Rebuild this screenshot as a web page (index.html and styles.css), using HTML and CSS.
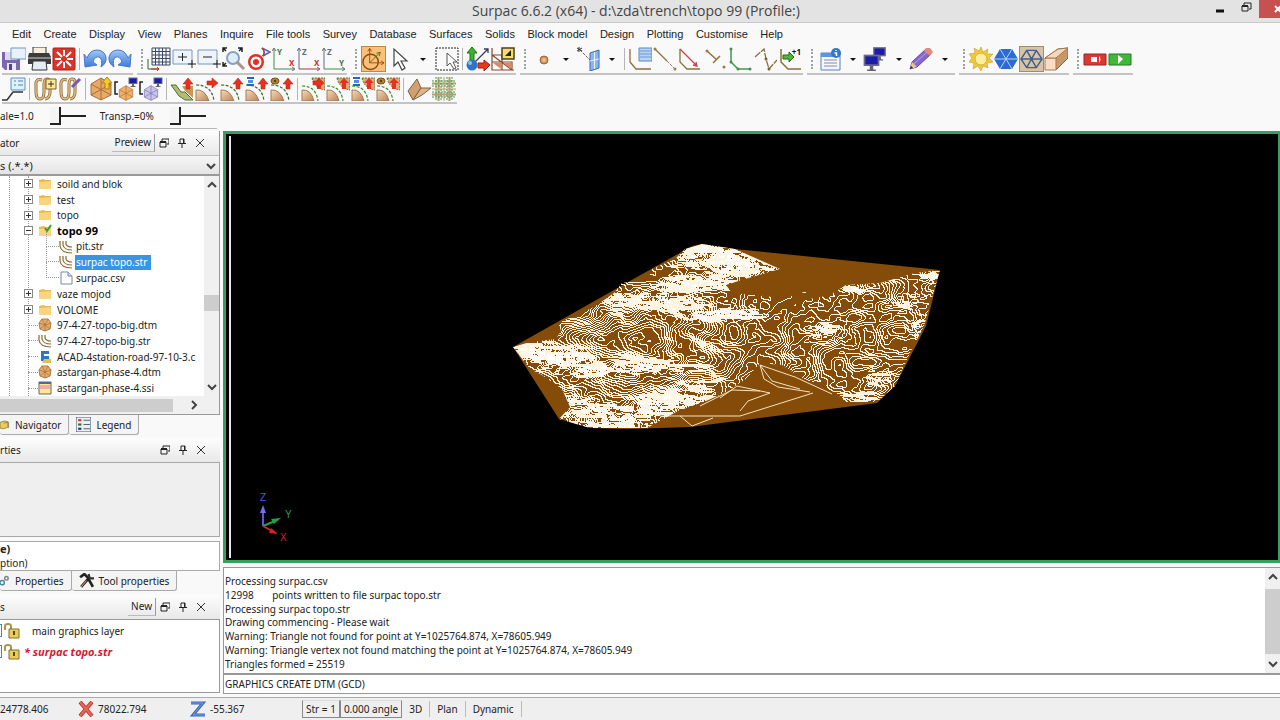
FILE: index.html
```html
<!DOCTYPE html>
<html lang="en">
<head>
  <meta charset="UTF-8">
  <meta name="viewport" content="width=device-width, initial-scale=1.0">
  <title>Surpac 6.6.2 (x64)</title>
  <link rel="stylesheet" href="styles.css">
</head>
<body>
  <!-- shared icons -->
  <svg class="sprite" aria-hidden="true">
    <defs>
      <linearGradient id="blue" x1="0" y1="0" x2="0" y2="1"><stop offset="0" stop-color="#9cc8f8"/><stop offset="1" stop-color="#3f7ad8"/></linearGradient>
      <linearGradient id="tan" x1="0" y1="0" x2="1" y2="1"><stop offset="0" stop-color="#f6dcc0"/><stop offset="1" stop-color="#b88050"/></linearGradient>
      <radialGradient id="ball"><stop offset="0" stop-color="#f8cfa0"/><stop offset="1" stop-color="#c08048"/></radialGradient>
    </defs>
    <symbol id="up" viewBox="0 0 24 24"><path d="M18 1l5 6h-3v5h-4V7h-3z" fill="#e8301c" stroke="#b03020" stroke-width=".6"/></symbol>
    <symbol id="right" viewBox="0 0 24 24"><path d="M23 6l-6-5v3h-5v4h5v3z" fill="#e8301c" stroke="#b03020" stroke-width=".6"/></symbol>
    <symbol id="dome" viewBox="0 0 24 24">
      <path d="M1 24V13q9-1 13 11z" fill="url(#tan)" stroke="#a87850"/>
      <path d="M1 8q16 0 18 16" fill="none" stroke="#3a6a28" stroke-width="1.2" stroke-dasharray="3 1.5"/>
    </symbol>
    <symbol id="corner" viewBox="0 0 24 24">
      <path d="M1 24V13q9-1 12 11z" fill="url(#tan)" stroke="#a87850"/>
      <path d="M1 9q14 0 16 15" fill="none" stroke="#3a8a28" stroke-width="1.2" stroke-dasharray="3 1.5"/>
      <path d="M11 1q2 10 13 12V1z" fill="#dca880" stroke="#5a7a28" stroke-dasharray="2 1"/>
      <path d="M18 1l5 5h-3v6h-4V6h-3z" fill="#e8301c"/>
    </symbol>
    <symbol id="sheet" viewBox="0 0 24 24"><path d="M2 1h7M2 8h7" stroke="#2a62c0" stroke-width="2"/><path d="M3 4.5h5" stroke="#5a8ad8" stroke-width="3"/></symbol>
    <symbol id="ring" viewBox="0 0 24 24"><ellipse cx="5" cy="4" rx="4" ry="3" fill="#b88030" stroke="#7a5018"/><circle cx="5" cy="4" r="1" fill="#422"/></symbol>
    <symbol id="hex" viewBox="0 0 24 24"><path d="M12 1l10 6v11l-10 5-10-5V7z"/><path d="M12 1v22M2 7l20 11M2 18L22 7" fill="none"/></symbol>
    <symbol id="screen" viewBox="0 0 24 24"><path d="M3 3h18v13H3z" fill="#6a6a90"/><path d="M5 5h14v9H5z" fill="#1c1ca8"/><path d="M10 16h4v4h3v2H7v-2h3z" fill="#666"/></symbol>
    <symbol id="coil" viewBox="0 0 24 24"><path d="M9 3Q2 1 3 9v6q0 7 4 7t4-7V7q0-5 3-5 4 0 3 6v7q0 6-5 7" fill="none" stroke="#8a6838" stroke-width="3"/><path d="M9 3Q2 1 3 9v6q0 7 4 7t4-7V7q0-5 3-5 4 0 3 6v7q0 6-5 7" fill="none" stroke="#e4bc7c" stroke-width="1.500"/></symbol>
    <symbol id="folder" viewBox="0 0 14 14"><path d="M1 3l5-1 1 1h6v9H1z" fill="#e8b848"/><path d="M1 5l12-1v8H1z" fill="#fbd47c"/></symbol>
    <symbol id="str" viewBox="0 0 14 14"><path d="M1 1v5q1 7 12 7M4 1v4q1 5 9 5M7 1v3q1 3 6 3" fill="none" stroke="#8a6a30" stroke-width="1.2"/></symbol>
    <symbol id="dtm" viewBox="0 0 14 14"><path d="M4 1h6l3 4-1 6-5 2-5-2-1-6z" fill="#e4ac6c" stroke="#b07840"/><path d="M4 1l3 6 3-6M1 5l6 2 6-2M2 11l5-4 5 4M7 7v6" fill="none" stroke="#a87038" stroke-width=".7"/></symbol>
    <symbol id="float" viewBox="0 0 10 10"><path d="M3 3V1h7v5H8M1 4h6v5H1z" fill="none" stroke="#222"/><path d="M1 4h6" stroke="#222" stroke-width="2"/></symbol>
    <symbol id="pin" viewBox="0 0 10 10"><path d="M3 5V1h4v4M1 5.500h8M5 6v4M6.500 1v4" fill="none" stroke="#222"/></symbol>
    <symbol id="x" viewBox="0 0 10 10"><path d="M1 1l8 8M9 1L1 9" stroke="#333"/></symbol>
    <symbol id="chev-up" viewBox="0 0 10 10"><path d="M1 7l4-4 4 4" fill="none" stroke="#444" stroke-width="2"/></symbol>
    <symbol id="chev-down" viewBox="0 0 10 10"><path d="M1 3l4 4 4-4" fill="none" stroke="#444" stroke-width="2"/></symbol>
    <symbol id="chev-right" viewBox="0 0 10 10"><path d="M3 1l4 4-4 4" fill="none" stroke="#444" stroke-width="2"/></symbol>
    <symbol id="lock" viewBox="0 0 16 16"><path d="M1 7V3q0-2 3-2t3 2v5" fill="none" stroke="#a89848" stroke-width="2"/><path d="M5 6h10v9H5z" fill="#e8cc60" stroke="#8a7020"/><path d="M10 8v4" stroke="#5a4810" stroke-width="2"/></symbol>
  </svg>

  <header class="titlebar">
    <h1>Surpac 6.6.2 (x64) - d:\zda\trench\topo 99 (Profile:)</h1>
    <div class="window-buttons">
      <button aria-label="Minimize"><svg width="10" height="10"><path d="M1 8h8" stroke="#111" stroke-width="3"/></svg></button>
      <button aria-label="Restore"><svg width="11" height="11"><path d="M3 3V1h7v6H8M1 4h6v5H1z" fill="none" stroke="#222"/><path d="M1 4h6" stroke="#222" stroke-width="2"/></svg></button>
      <button class="close" aria-label="Close"><svg width="8" height="8"><path d="M3 1l6 6M9 1L3 7" stroke="#fff" stroke-width="2"/></svg></button>
    </div>
  </header>

  <nav class="menubar">
    <button>Edit</button><button>Create</button><button>Display</button><button>View</button><button>Planes</button><button>Inquire</button><button>File tools</button><button>Survey</button><button>Database</button><button>Surfaces</button><button>Solids</button><button>Block model</button><button>Design</button><button>Plotting</button><button>Customise</button><button>Help</button>
  </nav>

  <div class="toolbars">
    <div class="toolbar">
      <button class="tool" aria-label="Save"><svg viewBox="0 0 24 24"><path d="M0 5h18v18H3l-3-3z" fill="#7a68b0"/><path d="M3 5h12v8H3z" fill="#ddd8f0"/><path d="M5 16h9v7H5z" fill="#e8e8f0"/><path d="M7 17h3v6H7z" fill="#54448c"/><path d="M9 1h15v11H9z" fill="#e8f2fc" stroke="#6a98c8"/></svg></button>
      <button class="tool" aria-label="Print"><svg viewBox="0 0 24 24"><path d="M6 0h13v7H6z" fill="#f8f0d8" stroke="#333"/><path d="M2 6h20l2 4v7H1v-7z" fill="#3c3c3c"/><path d="M1 11h23" stroke="#888" stroke-width="2"/><path d="M6 14h13l1 9H5z" fill="#e4ecf6" stroke="#333"/></svg></button>
      <button class="tool" aria-label="Reset graphics"><svg viewBox="0 0 24 24"><rect x="1" y="1" width="22" height="22" rx="1" fill="#dc3328" stroke="#a82018"/><path d="M12 3v6M12 15v6M3 12h6M15 12h6M5 5l5 5M14 14l5 5M19 5l-5 5M10 14l-5 5" stroke="#fff" stroke-width="2"/></svg></button>
      <span class="sep"></span>
      <button class="tool" aria-label="Undo"><svg viewBox="0 0 24 24"><path d="M1 7l1 13 12-2-4-3q2-6 6-5 4 2 2 10 6-4 5-10-2-7-9-7-7 0-10 8z" fill="url(#blue)" stroke="#4878c8"/></svg></button>
      <button class="tool" aria-label="Redo"><svg viewBox="0 0 24 24"><path d="M23 7l-1 13-12-2 4-3q-2-6-6-5-4 2-2 10-6-4-5-10 2-7 9-7 7 0 10 8z" fill="url(#blue)" stroke="#4878c8"/></svg></button>
    </div>
    <div class="toolbar">
      <span class="grip"></span>
      <button class="tool" aria-label="Grid"><svg viewBox="0 0 24 24"><path d="M5 1h18v17H5zM5 4.500h18M5 8h18M5 11.500h18M5 15h18M8.500 1v17M12 1v17M15.500 1v17M19 1v17" fill="none" stroke="#384868"/><path d="M1 12v10h11" fill="none" stroke="#286828"/><path d="M4 22h8l-2-2M10 24l2-2" stroke="#c03020" fill="none"/></svg></button>
      <button class="tool" aria-label="Zoom in"><svg viewBox="0 0 24 24"><path d="M1 3h19v14H1z" fill="#eef4fc" stroke="#7898b8"/><path d="M10.500 6v8M6 10h9M20 13v8M16 17h8" stroke="#222"/></svg></button>
      <button class="tool" aria-label="Zoom out"><svg viewBox="0 0 24 24"><path d="M1 3h19v14H1z" fill="#eef4fc" stroke="#7898b8"/><path d="M6 10h9M20 13v8M16 17h8" stroke="#222"/></svg></button>
      <button class="tool" aria-label="Zoom all"><svg viewBox="0 0 24 24"><path d="M1 5V1h4M1 1l3 3M16 1h4v4M20 1l-3 3M1 15v4h4M1 19l3-3" fill="none" stroke="#222" stroke-width="1.500"/><circle cx="11" cy="11" r="6" fill="#dcecf8" stroke="#8aa0b8" stroke-width="2"/><path d="M15 15l7 7" stroke="#a89888" stroke-width="3"/></svg></button>
      <button class="tool" aria-label="Centre"><svg viewBox="0 0 24 24"><circle cx="9" cy="15" r="8" fill="#e03028"/><circle cx="9" cy="15" r="5.500" fill="#fff"/><circle cx="9" cy="15" r="3" fill="#e03028"/><path d="M15 1l8 4-7 4q3-4-1-8z" fill="none" stroke="#6858a0" stroke-width="1.500"/><path d="M15 1q4 5 0 8" fill="none" stroke="#d03028"/></svg></button>
      <button class="tool axes" aria-label="Plan view"><svg viewBox="0 0 24 24"><path d="M2 2v20" stroke="#389048"/><path d="M2 22h20" stroke="#408850"/><path d="M0 4l2-3 2 3M20 20l3 2-3 2" fill="none" stroke="#666"/><text x="5" y="8" fill="#387848">Y</text><text x="17" y="19" fill="#c83028">X</text></svg></button>
      <button class="tool axes" aria-label="X section"><svg viewBox="0 0 24 24"><path d="M2 2v20" stroke="#586890"/><path d="M2 22h20" stroke="#a83830"/><path d="M0 4l2-3 2 3M20 20l3 2-3 2" fill="none" stroke="#666"/><text x="5" y="8" fill="#586890">Z</text><text x="17" y="19" fill="#c83028">X</text></svg></button>
      <button class="tool axes" aria-label="Y section"><svg viewBox="0 0 24 24"><path d="M2 2v20" stroke="#586890"/><path d="M2 22h20" stroke="#389048"/><path d="M0 4l2-3 2 3M20 20l3 2-3 2" fill="none" stroke="#666"/><text x="5" y="8" fill="#586890">Z</text><text x="17" y="19" fill="#387848">Y</text></svg></button>
    </div>
    <div class="toolbar">
      <span class="grip"></span>
      <button class="tool on" aria-label="Rotate"><svg viewBox="0 0 24 24"><circle cx="9" cy="15" r="8" fill="none" stroke="#8a4a10" stroke-width="1.500"/><path d="M8 1v15h15M6 4l2-3 2 3M20 14l3 2-3 2" fill="none" stroke="#a84818"/><path d="M8 16L19 5l-4 1M19 5l-1 4" fill="none" stroke="#487818"/></svg></button>
      <button class="tool" aria-label="Select"><svg viewBox="0 0 24 24"><path d="M8 2v17l4-4 4 8 3-2-4-7h6z" fill="#fff" stroke="#444" stroke-width="1.200"/></svg></button>
      <button class="drop wide" aria-label="Select options"></button>
      <button class="tool" aria-label="Window select"><svg viewBox="0 0 24 24"><rect x="1" y="1" width="22" height="22" fill="none" stroke="#222" stroke-dasharray="2 1"/><path d="M12 6v13l3-3 4 6 2-1-3-6h4z" fill="#fff" stroke="#555"/></svg></button>
      <span class="sep"></span>
      <button class="tool" aria-label="Orbit"><svg viewBox="0 0 24 24"><path d="M6 18L22 2M18 2h4v4" fill="none" stroke="#383868" stroke-width="1.300"/><path d="M6 0l5 6H8v8H4V6H1z" fill="#38b828" stroke="#207018"/><path d="M24 18l-6-5v3h-6v5h6v3z" fill="#e83820" stroke="#a02010"/><circle cx="6" cy="18" r="5.500" fill="#3074c8"/><circle cx="4" cy="16" r="2" fill="#90c0f0"/></svg></button>
      <button class="tool" aria-label="Section"><svg viewBox="0 0 24 24"><path d="M1 1v22h22M1 8h10v15M1 15h20v8M1 8l20 15" fill="none" stroke="#884830" stroke-width="1.200"/><path d="M2 16l8 6v-6zM12 16l8 6v-6z" fill="#d88a68"/><path d="M11 1h12v11H11z" fill="#f8dc68" stroke="#484020" stroke-width="1.500"/><path d="M14 9h6V3z" fill="#222"/></svg></button>
    </div>
    <div class="toolbar">
      <span class="grip"></span>
      <button class="tool" aria-label="Point"><svg viewBox="0 0 24 24"><circle cx="14" cy="13" r="4" fill="url(#ball)" stroke="#a06838"/></svg></button>
      <button class="drop" aria-label="Point options"></button>
      <button class="tool" aria-label="Plane"><svg viewBox="0 0 24 24"><path d="M4 3l10 10" stroke="#a04850" stroke-dasharray="3 1"/><path d="M1 4l5-3M3 0v5M1 1l5 3" stroke="#333"/><path d="M14 6l9-3v18l-9 3z" fill="#8cb4f0" stroke="#3868b8"/><path d="M18.500 5v17M14 14l9-2" stroke="#e8f2ff"/></svg></button>
      <button class="drop" aria-label="Plane options"></button>
      <span class="sep"></span>
      <button class="tool" aria-label="New string"><svg viewBox="0 0 24 24"><path d="M11 1h13v13H11z" fill="#b8d4f4" stroke="#5888c0"/><path d="M12 4h12M12 7h12M12 10h12" stroke="#6898d0"/><path d="M2 2v13l6 7h15" fill="none" stroke="#8a7038" stroke-width="1.300"/></svg></button>
      <button class="tool" aria-label="Extend"><svg viewBox="0 0 24 24"><path d="M2 2l12 12" stroke="#907038" stroke-width="1.300"/><path d="M14 14l8 8" stroke="#a07868" stroke-dasharray="3 1"/><circle cx="2" cy="2" r="1.500" fill="#a07848"/><circle cx="22" cy="22" r="1.500" fill="#a07848"/></svg></button>
      <button class="tool" aria-label="Close string"><svg viewBox="0 0 24 24"><path d="M2 2v13l7 7h13" fill="none" stroke="#8a7038" stroke-width="1.300"/><path d="M2 2l17 17M15 18l4 1-1-4" fill="none" stroke="#c04850" stroke-width="1.300"/></svg></button>
      <button class="tool" aria-label="Trim"><svg viewBox="0 0 24 24"><path d="M4 4l10 9M10 16l7-7" stroke="#907038" stroke-width="1.500"/><circle cx="4" cy="4" r="1.500" fill="#a07848"/><circle cx="21" cy="20" r="1.500" fill="#a07848"/></svg></button>
      <button class="tool" aria-label="Segment"><svg viewBox="0 0 24 24"><path d="M3 2v13l7 7h13" fill="none" stroke="#38a048" stroke-width="1.500"/><g fill="#60805a"><circle cx="3" cy="2" r="1.500"/><circle cx="3" cy="15" r="1.500"/><circle cx="10" cy="22" r="1.500"/><circle cx="22" cy="22" r="1.500"/></g></svg></button>
      <button class="tool" aria-label="Break"><svg viewBox="0 0 24 24"><path d="M2 10l9-8 2 10 3 10 8-9" fill="none" stroke="#8a7038" stroke-width="1.300" stroke-dasharray="7 1"/><circle cx="13" cy="12" r="1.500" fill="#806030"/><circle cx="16" cy="22" r="1.500" fill="#806030"/></svg></button>
      <button class="tool axes" aria-label="Next string"><svg viewBox="0 0 24 24"><path d="M3 2v13l7 7h13" fill="none" stroke="#8a7038" stroke-width="1.500"/><path d="M16 10l-5-5v3H5v4h6v3z" fill="#50b830" stroke="#286818"/><text x="23" y="8" text-anchor="end" fill="#111">+1</text></svg></button>
    </div>
    <div class="toolbar">
      <span class="grip"></span>
      <button class="tool" aria-label="Properties info"><svg viewBox="0 0 24 24"><path d="M4 6h19v17H4z" fill="#f4f8fc" stroke="#5880b8"/><path d="M4 6h19v4H4z" fill="#5898e0"/><path d="M7 13h13M7 16h13M7 19h13" stroke="#88a"/><circle cx="19" cy="6" r="5" fill="#3078c8"/><path d="M19 3v1M17.500 6h2v3" stroke="#fff" fill="none" stroke-width="1.500"/></svg></button>
      <button class="drop" aria-label="Info options"></button>
      <button class="tool" aria-label="Displays"><svg viewBox="0 0 24 24"><use href="#screen" x="8" y="-2" width="17" height="17"/><use href="#screen" x="-2" y="5" width="21" height="21"/></svg></button>
      <button class="drop" aria-label="Display options"></button>
      <button class="tool" aria-label="Edit"><svg viewBox="0 0 24 24"><path d="M1 22l2-7L17 2l5 5L8 20z" fill="#8868c8" stroke="#60489c"/><path d="M15 4l2-3h4l3 4-3 4z" fill="#e88878"/><path d="M1 22l2-7 5 5z" fill="#e8c890"/><path d="M1 22l1-3 2 2z" fill="#222"/><path d="M5 17L18 5" stroke="#b8a0e8"/></svg></button>
      <button class="drop" aria-label="Edit options"></button>
    </div>
    <div class="toolbar">
      <span class="grip"></span>
      <button class="tool" aria-label="Light"><svg viewBox="0 0 24 24"><path d="M12 0l2 5 5-3-1 5 6 0-4 4 4 4-6 1 1 5-5-2-2 5-3-5-5 3 1-6-5-1 3-4-3-4 6-1-1-5 5 3z" fill="#f0c838" stroke="#c8a030" stroke-width=".6"/><circle cx="12" cy="12" r="6" fill="#fcf0a0" stroke="#d8b040"/></svg></button>
      <button class="tool" aria-label="Shaded"><svg viewBox="0 0 24 24"><path d="M6 2h12l6 10-6 10H6L0 12z" fill="#2c6cd0"/><path d="M6 2l12 20M18 2L6 22M0 12h24" stroke="#b8d4fa"/></svg></button>
      <button class="tool on grey" aria-label="Wireframe"><svg viewBox="0 0 24 24"><path d="M7 3h10l6 9-6 9H7l-6-9zM7 3l10 18M17 3L7 21M1 12h22" fill="none" stroke="#40608c" stroke-width="1.500"/></svg></button>
      <button class="tool" aria-label="Solid"><svg viewBox="0 0 24 24"><path d="M1 11L14 2l10-1v10L12 23z" fill="#c89868" stroke="#806040"/><path d="M1 11h11v12H1z" fill="#fadcc4" stroke="#a87850"/><path d="M1 11L14 2l10-1-12 10z" fill="#f4d8b8" stroke="#a87850"/></svg></button>
    </div>
    <div class="toolbar">
      <span class="grip"></span>
      <button class="tool" aria-label="Record"><svg viewBox="0 0 24 24"><path d="M1 7h22v11H1z" fill="#dc3830" stroke="#90282c"/><path d="M8 10h6v5H8zM16 9q3 3 0 7z" fill="#fff"/></svg></button>
      <button class="tool" aria-label="Play"><svg viewBox="0 0 24 24"><path d="M1 7h22v11H1z" fill="#40b838" stroke="#287828"/><path d="M10 8l5 4-5 5z" fill="#fff"/></svg></button>
    </div>
  </div>

  <div class="toolbars second">
    <div class="toolbar">
      <button class="tool" aria-label="Profile"><svg viewBox="0 0 24 24"><path d="M9 1h14v12H9z" fill="#e0f0fc" stroke="#5890c8"/><path d="M12 4h2M16 4h5M12 8h2M16 8h5" stroke="#48a"/><path d="M0 23h5l6-8h10" fill="none" stroke="#333" stroke-width="1.500"/></svg></button>
      <span class="sep"></span>
      <button class="tool" aria-label="Add coil"><svg viewBox="0 0 24 24"><use href="#coil"/><path d="M13 2h10v10H13z" fill="#fce898" stroke="#806020"/><path d="M18 4v6M15 7h6" stroke="#332"/></svg></button>
      <button class="tool" aria-label="Edit coil"><svg viewBox="0 0 24 24"><use href="#coil"/><path d="M14 10l8-8" stroke="#7858b8" stroke-width="3"/></svg></button>
      <span class="sep"></span>
      <button class="tool" aria-label="Create DTM"><svg viewBox="0 0 24 24"><use href="#hex" fill="#e8a868" stroke="#a87038"/><path d="M18 0l5 6h-3v6h-4V6h-3z" fill="#f8cc28" stroke="#a88010"/></svg></button>
      <button class="tool" aria-label="Display DTM"><svg viewBox="0 0 24 24"><path d="M4 5H1v12h3" fill="none" stroke="#222" stroke-width="1.500"/><use href="#hex" x="4" y="8" width="16" height="16" fill="#f0b068" stroke="#a87038"/><use href="#screen" x="13" y="-1" width="12" height="12"/></svg></button>
      <button class="tool" aria-label="Hide DTM"><svg viewBox="0 0 24 24"><path d="M4 5H1v12h3" fill="none" stroke="#222" stroke-width="1.500"/><use href="#hex" x="4" y="8" width="16" height="16" fill="#c8c4ec" stroke="#7870b0"/><use href="#screen" x="13" y="-1" width="12" height="12"/></svg></button>
      <span class="sep"></span>
      <button class="tool" aria-label="Pit design"><svg viewBox="0 0 24 24"><path d="M1 8h5l5 7h4l8 8h-8L9 19z" fill="#b8b878" stroke="#487830"/><path d="M12 9h11v12l-8-7z" fill="#c89858"/><use href="#up"/></svg></button>
      <button class="tool" aria-label="Expand right"><svg viewBox="0 0 24 24"><use href="#dome"/><use href="#right"/></svg></button>
      <button class="tool" aria-label="Expand up"><svg viewBox="0 0 24 24"><use href="#dome"/><use href="#up"/></svg></button>
      <button class="tool" aria-label="Expand to sheet"><svg viewBox="0 0 24 24"><use href="#dome"/><use href="#sheet"/><use href="#up"/></svg></button>
      <button class="tool" aria-label="Expand to ring"><svg viewBox="0 0 24 24"><use href="#dome"/><use href="#ring"/><use href="#up"/></svg></button>
      <span class="sep"></span>
      <button class="tool" aria-label="Bench right"><svg viewBox="0 0 24 24"><use href="#corner"/><use href="#right"/></svg></button>
      <button class="tool" aria-label="Bench up"><svg viewBox="0 0 24 24"><use href="#corner"/></svg></button>
      <button class="tool" aria-label="Bench to sheet"><svg viewBox="0 0 24 24"><use href="#corner"/><use href="#sheet"/></svg></button>
      <button class="tool" aria-label="Bench to ring"><svg viewBox="0 0 24 24"><use href="#corner"/><use href="#ring"/></svg></button>
      <span class="sep"></span>
      <button class="tool" aria-label="Fold"><svg viewBox="0 0 24 24"><path d="M1 14L10 2l4 9-8 12z" fill="#d0a070" stroke="#806040"/><path d="M14 11h10l-9 7-9 5z" fill="#deb488" stroke="#806040"/></svg></button>
      <button class="tool" aria-label="Mesh"><svg viewBox="0 0 24 24"><path d="M0 6.500h24M0 17.500h24M6.500 0v24M17.500 0v24" stroke="#b0a070" stroke-width="2"/><path d="M0 12h24M12 0v24" stroke="#b0a070"/><path d="M0 4h24M0 9h24M0 15h24M0 20h24M4 0v24M9 0v24M15 0v24M20 0v24" stroke="#4f9040" stroke-dasharray="2 1"/></svg></button>
    </div>
  </div>

  <div class="sliders">
    <label for="scale">ale=1.0</label>
    <input type="range" id="scale" value="0">
    <label for="transp">Transp.=0%</label>
    <input type="range" id="transp" value="0">
  </div>

  <main class="workspace">
    <aside class="sidebar">
      <section class="panel navigator">
        <div class="panel-head">
          <h2>ator</h2>
          <button class="head-btn">Preview</button>
          <button class="ico" aria-label="Float"><svg><use href="#float"/></svg></button>
          <button class="ico" aria-label="Pin"><svg><use href="#pin"/></svg></button>
          <button class="ico" aria-label="Close"><svg><use href="#x"/></svg></button>
        </div>
        <div class="filter">
          <select aria-label="File filter"><option>s (.*.*)</option></select>
          <svg><use href="#chev-down"/></svg>
        </div>
        <div class="tree-box">
          <ul class="tree">
            <li><i class="box plus"></i><svg><use href="#folder"/></svg>soild and blok</li>
            <li><i class="box plus"></i><svg><use href="#folder"/></svg>test</li>
            <li><i class="box plus"></i><svg><use href="#folder"/></svg>topo</li>
            <li><i class="box"></i><svg viewBox="0 0 14 14"><use href="#folder"/><path d="M7 4l2 3 4-6" fill="none" stroke="#38a030" stroke-width="2"/></svg><b>topo 99</b></li>
            <li class="child"><svg><use href="#str"/></svg><span>pit.str</span></li>
            <li class="child"><svg><use href="#str"/></svg><span class="selected">surpac topo.str</span></li>
            <li class="child last"><svg viewBox="0 0 14 14"><path d="M2 1h7l4 4v8H2z" fill="#fff" stroke="#7888a8"/><path d="M9 1v4h4" fill="#cde" stroke="#7888a8"/></svg><span>surpac.csv</span></li>
            <li><i class="box plus"></i><svg><use href="#folder"/></svg>vaze mojod</li>
            <li><i class="box plus"></i><svg><use href="#folder"/></svg>VOLOME</li>
            <li><i class="dash"></i><svg><use href="#dtm"/></svg>97-4-27-topo-big.dtm</li>
            <li><i class="dash"></i><svg><use href="#str"/></svg>97-4-27-topo-big.str</li>
            <li><i class="dash"></i><svg viewBox="0 0 14 14"><path d="M3 1h8v3H6v2h5v5H3z" fill="#2878c8"/><path d="M6 9h7v4H4z" fill="#e8c040"/></svg>ACAD-4station-road-97-10-3.c</li>
            <li><i class="dash"></i><svg><use href="#dtm"/></svg>astargan-phase-4.dtm</li>
            <li><i class="dash"></i><svg viewBox="0 0 14 14"><path d="M1 1h12v12H1z" fill="#fbe890" stroke="#666"/><path d="M2 4h10v4H2z" fill="#f4a8b0"/><path d="M1 2h12" stroke="#4868a8" stroke-width="2"/></svg>astargan-phase-4.ssi</li>
          </ul>
          <div class="vscroll"><svg><use href="#chev-up"/></svg><div class="track"><div class="thumb"></div></div><svg><use href="#chev-down"/></svg></div>
        </div>
        <div class="hscroll"><div class="thumb"></div><svg><use href="#chev-right"/></svg></div>
      </section>
      <div class="tabs">
        <button class="tab first"><svg viewBox="0 0 14 14"><path d="M0 4l6-2 5 1v8l-6 2-5-1z" fill="#e8cc60" stroke="#86702c"/><path d="M5 5l7-1v8" fill="none" stroke="#86702c"/></svg>Navigator</button>
        <button class="tab"><svg viewBox="0 0 14 14"><path d="M0 0h14v14H0z" fill="#e8f0f4" stroke="#456"/><path d="M2 3h3" stroke="#c33" stroke-width="2"/><path d="M2 7h3" stroke="#363" stroke-width="2"/><path d="M2 11h3" stroke="#338" stroke-width="2"/><path d="M7 3h6M7 7h6M7 11h6" stroke="#566"/></svg>Legend</button>
      </div>

      <section class="panel props">
        <div class="panel-head">
          <h2>rties</h2>
          <button class="ico" aria-label="Float"><svg><use href="#float"/></svg></button>
          <button class="ico" aria-label="Pin"><svg><use href="#pin"/></svg></button>
          <button class="ico" aria-label="Close"><svg><use href="#x"/></svg></button>
        </div>
        <div class="props-body"></div>
        <div class="props-desc"><b>e)</b><span>ption)</span></div>
      </section>
      <div class="tabs">
        <button class="tab first"><svg viewBox="0 0 14 14"><circle cx="3" cy="10" r="3" fill="none" stroke="#4888a8" stroke-width="2"/><circle cx="9" cy="4" r="2.500" fill="none" stroke="#788" stroke-width="2"/></svg>Properties</button>
        <button class="tab"><svg viewBox="0 0 14 14"><path d="M1 4l4-3 3 3 5 9M2 13l7-8" fill="none" stroke="#222" stroke-width="2.500"/><path d="M9 1l1 4 4 0" fill="none" stroke="#333" stroke-width="2"/><path d="M2 13l5-6" stroke="#c89838"/></svg>Tool properties</button>
      </div>

      <section class="panel layers">
        <div class="panel-head">
          <h2>s</h2>
          <button class="head-btn">New</button>
          <button class="ico" aria-label="Float"><svg><use href="#float"/></svg></button>
          <button class="ico" aria-label="Pin"><svg><use href="#pin"/></svg></button>
          <button class="ico" aria-label="Close"><svg><use href="#x"/></svg></button>
        </div>
        <ul class="layer-list">
          <li><i></i><svg><use href="#lock"/></svg><span>main graphics layer</span></li>
          <li class="active"><i></i><svg><use href="#lock"/></svg><b>* surpac topo.str</b></li>
        </ul>
      </section>
    </aside>

    <div class="content">
      <div class="viewport">
        <canvas id="terrain" width="434" height="192"></canvas>
        <svg class="triad" viewBox="0 0 44 56">
          <path d="M9 36V22" stroke="#5858e0" stroke-width="2"/><path d="M6 23l3-8 3 8z" fill="#7070f0"/>
          <path d="M9 36l12-5" stroke="#28a040" stroke-width="2"/><path d="M17 29l10-1-7 6z" fill="#28a040"/>
          <path d="M9 36l9 5" stroke="#d02828" stroke-width="2"/><path d="M17 38l7 6-9-1z" fill="#d02828"/>
          <text x="6" y="11" fill="#5858e0">Z</text><text x="31" y="28" fill="#28a040">Y</text><text x="26" y="51" fill="#d02828">X</text>
        </svg>
      </div>
      <div class="console">
        <div class="log-box">
          <div class="log">
            <p>Processing surpac.csv</p>
            <p>12998 <span class="tabbed">points written to file surpac topo.str</span></p>
            <p>Processing surpac topo.str</p>
            <p>Drawing commencing - Please wait</p>
            <p>Warning: Triangle not found for point at Y=1025764.874, X=78605.949</p>
            <p>Warning: Triangle vertex not found matching the point at Y=1025764.874, X=78605.949</p>
            <p>Triangles formed = 25519</p>
          </div>
          <div class="vscroll"><svg><use href="#chev-up"/></svg><div class="track"><div class="thumb"></div></div><svg><use href="#chev-down"/></svg></div>
        </div>
        <input class="command" aria-label="Command" value="GRAPHICS CREATE DTM (GCD)">
      </div>
    </div>
  </main>

  <footer class="status">
    <span class="coord y">24778.406</span>
    <span class="coord"><svg viewBox="0 0 16 16"><path d="M2 1l12 14M14 1L2 15" stroke="#c03830" stroke-width="4"/><path d="M2 1l12 14M14 1L2 15" stroke="#e86858" stroke-width="2"/></svg>78022.794</span>
    <span class="coord"><svg viewBox="0 0 16 16"><path d="M1 2h12L3 14h12" fill="none" stroke="#3868b8" stroke-width="3"/><path d="M1 2h12L3 14h12" fill="none" stroke="#78a0e0"/></svg>-55.367</span>
    <button>Str = 1</button><button>0.000 angle</button>
    <span class="mode">3D</span><span class="mode">Plan</span><span class="mode">Dynamic</span>
  </footer>

  <script src="terrain.js"></script>
</body>
</html>
```

FILE: styles.css
```css
* {
  box-sizing: border-box;
}

body {
  margin: 0;
  height: 100vh;
  display: flex;
  flex-direction: column;
  overflow: hidden;
  background: #f9f9f9;
  color: #222;
  font-family: "Noto Sans", "DejaVu Sans Condensed", sans-serif;
  font-size: 10px;
}

button,
input,
select {
  font: inherit;
  color: inherit;
  border: 0;
  padding: 0;
  margin: 0;
  background: none;
}

h1, h2, p, ul {
  margin: 0;
  padding: 0;
  font-size: inherit;
  font-weight: normal;
  list-style: none;
}

.sprite {
  position: absolute;
  width: 0;
  height: 0;
}

/* title and menu */
.titlebar {
  position: relative;
  flex: none;
  height: 23px;
  background: #e3e3e3;
  border-bottom: 1px solid #cacaca;
  text-align: center;
}

.titlebar h1 {
  font-family: "Open Sans", sans-serif;
  font-size: 14px;
  line-height: 22px;
  color: #444;
  padding-right: 8px;
}

.window-buttons {
  position: absolute;
  top: 0;
  right: 0;
  display: flex;
}

.window-buttons button {
  width: 26px;
  height: 18px;
}

.window-buttons .close {
  width: 21px;
  background: #c75050;
  text-align: right;
  overflow: hidden;
}

.menubar {
  flex: none;
  display: flex;
  justify-content: space-between;
  max-width: 783px;
  height: 22px;
  padding-left: 12px;
}

.menubar button {
  font-family: "Liberation Sans", Arial, sans-serif;
  font-size: 11px;
}

/* toolbars */
.toolbars {
  flex: none;
  display: flex;
  gap: 4px;
  height: 30px;
  padding-left: 2px;
}

.toolbar {
  display: flex;
  align-items: center;
  border-bottom: 2px solid #c4c4c4;
}

.tool {
  width: 25px;
  height: 26px;
}

.tool svg {
  display: block;
  width: 24px;
  height: 24px;
}

.tool.on {
  background: #f8c078;
  border: 1px solid #c08840;
}

.tool.on.grey {
  background: #d8c4a4;
  border-color: #a08c6c;
}

.tool.on svg {
  width: 23px;
}

.axes text {
  font-size: 8px;
  font-weight: bold;
}

.drop {
  width: 21px;
  height: 26px;
}

.drop.wide {
  width: 24px;
}

.drop::before {
  content: "";
  display: block;
  width: 0;
  margin: 0 auto;
  border: 3px solid transparent;
  border-top: 3px solid #111;
  border-bottom: 0;
}

.sep {
  width: 1px;
  height: 22px;
  margin: 0 3px 0 2px;
  background: #b4b4b4;
}

.grip {
  height: 20px;
  margin: 0 4px;
  border-left: 2px dotted #9aa4a8;
}

.toolbars.second {
  height: 29px;
}

.sliders {
  flex: none;
  display: flex;
  align-items: center;
  width: 217px;
  height: 25px;
  border-bottom: 1px solid #b8b8b8;
}

.sliders label {
  padding-right: 16px;
}

.sliders input {
  appearance: none;
  width: 36px;
  height: 18px;
  margin-right: 14px;
  background: linear-gradient(#222, #222) 10px 8px / 100% 2px no-repeat;
}

.sliders input::-webkit-slider-thumb {
  appearance: none;
  width: 11px;
  height: 18px;
  background: #f4f4f4;
  border-right: 2px solid #222;
  border-bottom: 2px solid #222;
}

/* main area */
.workspace {
  flex: 1;
  min-height: 0;
  display: grid;
  grid-template-columns: 220px 1fr;
  gap: 3px;
  padding-top: 2px;
}

.sidebar {
  display: flex;
  flex-direction: column;
  min-height: 0;
}

.panel-head {
  display: flex;
  align-items: center;
  height: 24px;
  padding: 0 10px 1px 0;
  background: linear-gradient(#fdfdfd, #e8e8e8);
}

.panel-head h2 {
  flex: 1;
}

.head-btn {
  height: 18px;
  padding: 0 3px;
  border-right: 1px solid #999;
  border-bottom: 1px solid #bbb;
}

.ico {
  width: 18px;
  height: 18px;
}

.ico svg,
.vscroll svg,
.hscroll svg,
.filter svg {
  display: block;
  width: 10px;
  height: 10px;
  margin: 0 auto;
}

.navigator {
  border-right: 1px solid #999;
  border-bottom: 1px solid #999;
}

.filter {
  position: relative;
  border-bottom: 2px solid #999;
  background: linear-gradient(#f8f8f8, #e4e4e4);
}

.filter select {
  display: block;
  appearance: none;
  width: 100%;
  height: 19px;
  border-top: 1px solid #bbb;
  font-size: 11px;
}

.filter svg {
  position: absolute;
  right: 3px;
  top: 6px;
}

.tree-box {
  display: flex;
  height: 220px;
  background: #fff;
}

.tree {
  position: relative;
  flex: 1;
  min-width: 0;
  display: grid;
  grid-auto-rows: 1fr;
  overflow: hidden;
}

.tree::before,
.tree::after {
  content: "";
  position: absolute;
  top: 0;
  bottom: 0;
  left: 9px;
  border-left: 1px dotted #999;
}

.tree::after {
  left: 28px;
}

.tree li {
  position: relative;
  z-index: 1;
  display: flex;
  align-items: center;
  padding-left: 24px;
  white-space: nowrap;
}

.tree svg {
  flex: none;
  width: 14px;
  height: 14px;
  margin-right: 5px;
}

.tree b {
  font-size: 11px;
  color: #000;
}

.box {
  flex: none;
  width: 9px;
  height: 9px;
  margin-right: 5px;
  border: 1px solid #888;
  background: linear-gradient(#333, #333) center / 5px 1px no-repeat, #fff;
}

.box.plus {
  background: linear-gradient(#333, #333) center / 5px 1px no-repeat, linear-gradient(#333, #333) center / 1px 5px no-repeat, #fff;
}

.dash {
  flex: none;
  width: 10px;
  margin-left: 4px;
  border-top: 1px dotted #999;
}

.tree .child {
  padding-left: 59px;
}

.tree .child::before {
  content: "";
  position: absolute;
  left: 46px;
  top: -8px;
  bottom: 50%;
  width: 12px;
  border-left: 1px dotted #999;
  border-bottom: 1px dotted #999;
}

.tree .child svg {
  margin-right: 2px;
}

.tree .child span {
  padding: 0 1px;
  line-height: 15px;
}

.tree .child .selected {
  padding-right: 4px;
  background: #3a94e4;
  color: #fff;
}

.vscroll {
  flex: none;
  display: flex;
  flex-direction: column;
  width: 15px;
  padding: 4px 0;
  background: #f0f0f0;
}

.vscroll .track {
  flex: 1;
  display: flex;
  flex-direction: column;
}

.thumb {
  background: #cdcdcd;
}

.tree-box .thumb {
  height: 16px;
  margin-top: 105px;
}

.hscroll {
  display: flex;
  align-items: center;
  height: 18px;
  padding: 1px 20px 1px 0;
  background: #f0f0f0;
}

.hscroll .thumb {
  flex: 1;
  height: 13px;
  margin-right: 16px;
}

.tabs {
  display: flex;
  height: 20px;
}

.tab {
  display: flex;
  align-items: center;
  gap: 5px;
  padding: 0 7px;
  border: 1px solid #aaa;
  border-top: 0;
  border-left: 0;
  border-radius: 0 0 3px 3px;
  background: #f4f4f4;
}

.tab svg {
  width: 15px;
  height: 15px;
}

.tab.first {
  padding-left: 0;
}

.tab.first svg {
  width: 10px;
}

.props {
  margin-top: 3px;
}

.props-body {
  height: 75px;
  margin-bottom: 4px;
  background: #efefef;
  border: 1px solid #aaa;
  border-left: 0;
}

.props-desc {
  display: flex;
  flex-direction: column;
  height: 30px;
  line-height: 14px;
  background: #fff;
  border: 1px solid #aaa;
  border-left: 0;
}

.props-desc b {
  font-size: 11px;
}

.layers {
  flex: 1;
  display: flex;
  flex-direction: column;
  margin: 4px 0;
}

.layer-list {
  flex: 1;
  background: #fff;
  border: 1px solid #999;
  border-left: 0;
}

.layer-list li {
  display: flex;
  align-items: center;
  height: 21px;
}

.layer-list i {
  width: 2px;
  height: 13px;
  border: 1px solid #48a;
  border-left: 0;
}

.layer-list svg {
  width: 16px;
  height: 16px;
  margin: 0 6px 0 2px;
}

.layer-list span {
  padding-left: 6px;
}

.layer-list .active {
  font-size: 11px;
  font-style: italic;
  color: #d02030;
}

.layer-list .active svg {
  margin-right: 4px;
}

.content {
  display: flex;
  flex-direction: column;
  min-width: 0;
}

.viewport {
  position: relative;
  flex: 1;
  background: #000;
  border: 3px solid #3a9f58;
  border-right-width: 2px;
}

.viewport::before {
  content: "";
  position: absolute;
  left: 3px;
  top: 2px;
  bottom: 2px;
  border-left: 2px solid #e8e8e8;
}

#terrain {
  position: absolute;
  left: 27%;
  top: 25%;
}

.triad {
  position: absolute;
  left: 28px;
  bottom: 14px;
  width: 44px;
  height: 56px;
}

.triad text {
  font-family: "Liberation Sans", Arial, sans-serif;
  font-size: 10px;
}

.console {
  margin: 4px 0 3px;
  border: 1px solid #999;
  border-right: 0;
  background: #fff;
}

.log-box {
  display: flex;
  height: 107px;
  border-bottom: 2px solid #999;
}

.log {
  flex: 1;
  display: grid;
  grid-auto-rows: 1fr;
  align-items: center;
  padding: 7px 1px 2px;
  line-height: 13px;
}

.tabbed {
  margin-left: 16px;
}

.console .thumb {
  flex: 1;
  margin: 7px 0 5px;
}

.command {
  display: block;
  width: 100%;
  height: 18px;
  padding: 0 1px;
}

.status {
  flex: none;
  display: flex;
  align-items: center;
  height: 23px;
  background: #efefef;
  border-top: 1px solid #aaa;
}

.coord {
  display: flex;
  align-items: center;
  gap: 4px;
  width: 112px;
}

.coord.y {
  width: 78px;
}

.coord svg {
  width: 16px;
  height: 16px;
}

.status button {
  height: 18px;
  padding: 0 3px;
  border: 1px solid #888;
  border-top-color: #ddd;
}

.mode {
  padding: 0 7px;
  line-height: 16px;
  border-right: 1px solid #bbb;
}
```

FILE: terrain.js
```javascript
const canvas = document.getElementById('terrain');
const ctx = canvas.getContext('2d');
const W = canvas.width;
const H = canvas.height;

// edge of the triangulated surface
const hull = [[3, 106], [182, 5], [192, 3], [225, 8], [430, 29], [416, 85], [385, 145], [367, 162], [180, 186], [118, 188], [80, 187], [49, 178]];

// area covered by survey strings
const survey = [[3, 106], [20, 101], [46, 98], [51, 90], [48, 82], [66, 74], [84, 66], [104, 52], [112, 42], [138, 38], [142, 28], [165, 18], [175, 8], [192, 3], [225, 8], [270, 28],
  [235, 38], [216, 44], [222, 52], [275, 57], [297, 50], [290, 60], [320, 54], [336, 44], [370, 42], [405, 32], [430, 29], [424, 50], [414, 85],
  [400, 112], [385, 145], [367, 161], [336, 161], [326, 152], [290, 136], [272, 124], [250, 122], [236, 138], [214, 152], [196, 160],
  [168, 170], [137, 187], [80, 187], [49, 178], [60, 166], [52, 148], [32, 134], [20, 128]];

// steep ground: x, y, rx, ry, strength
const steep = [[195, 14, 34, 10, 2], [235, 26, 30, 9, 2], [190, 42, 34, 5, 2], [123, 57, 32, 6, 1], [170, 62, 34, 7, 1], [190, 75, 24, 4, 1],
  [22, 110, 18, 7, 2], [55, 118, 22, 8, 2], [80, 130, 18, 5, 2], [140, 126, 32, 5, 2], [115, 170, 50, 5, 2], [160, 160, 30, 5, 2], [190, 146, 20, 5, 1],
  [75, 180, 28, 7, 1], [120, 182, 22, 6, 2], [227, 73, 22, 4, 2], [317, 90, 16, 7, 1], [397, 62, 14, 8, 1], [370, 137, 12, 8, 1], [350, 157, 18, 4, 1],
  [340, 48, 14, 4, 1], [420, 36, 10, 5, 1], [410, 85, 7, 10, 1], [60, 160, 20, 8, 1]];

function hash(x, y) {
  const s = Math.sin(x * 127.1 + y * 311.7) * 43758.5453;
  return s - Math.floor(s);
}

function noise(x, y) {
  const xi = Math.floor(x), yi = Math.floor(y);
  let u = x - xi, v = y - yi;
  u = u * u * (3 - 2 * u);
  v = v * v * (3 - 2 * v);
  const a = hash(xi, yi) * (1 - u) + hash(xi + 1, yi) * u;
  const b = hash(xi, yi + 1) * (1 - u) + hash(xi + 1, yi + 1) * u;
  return a * (1 - v) + b * v;
}

function height(x, y) {
  let h = 10 * noise(x / 36, y / 24) + 5 * noise(x / 15, y / 11) + noise(x / 5, y / 4);
  // open pit
  const d = Math.hypot((x - 125) / 2, y - 97);
  h += Math.min(d, 60) / 2.8;
  let s = 0;
  for (const [sx, sy, rx, ry, k] of steep) {
    s += k * Math.exp(-(((x - sx) / rx) ** 2) - ((y - sy) / ry) ** 2);
  }
  return h + Math.min(s, 1.8) * 9 * noise(x / 9, y / 3);
}

function trace(points) {
  ctx.beginPath();
  points.forEach(([x, y]) => ctx.lineTo(x, y));
}

trace(hull);
ctx.closePath();
ctx.fillStyle = '#854b08';
ctx.fill();

ctx.save();
trace(survey);
ctx.clip();
for (let y = 0; y < H; y++) {
  for (let x = 0; x < W; x++) {
    const level = Math.floor(height(x, y));
    const dx = level !== Math.floor(height(x + 1, y));
    const dy = level !== Math.floor(height(x, y + 1));
    if (dx || dy) {
      ctx.fillStyle = dx && dy ? '#fff' : '#fbf3de';
      ctx.fillRect(x, y, 1, 1);
    }
  }
}
ctx.restore();

// loose strings
ctx.strokeStyle = '#f4e4c0';
ctx.lineWidth = 1;
[[[150, 175], [230, 175], [303, 152]],
 [[170, 175], [182, 185], [203, 177]],
 [[210, 157], [227, 145], [260, 152], [238, 160], [230, 170]],
 [[190, 165], [222, 149], [250, 150]],
 [[250, 124], [285, 136], [322, 153]],
 [[250, 124], [254, 138], [268, 146], [300, 151]],
 [[250, 124], [262, 140], [290, 148]]].forEach((line) => {
  trace(line);
  ctx.stroke();
});
```
